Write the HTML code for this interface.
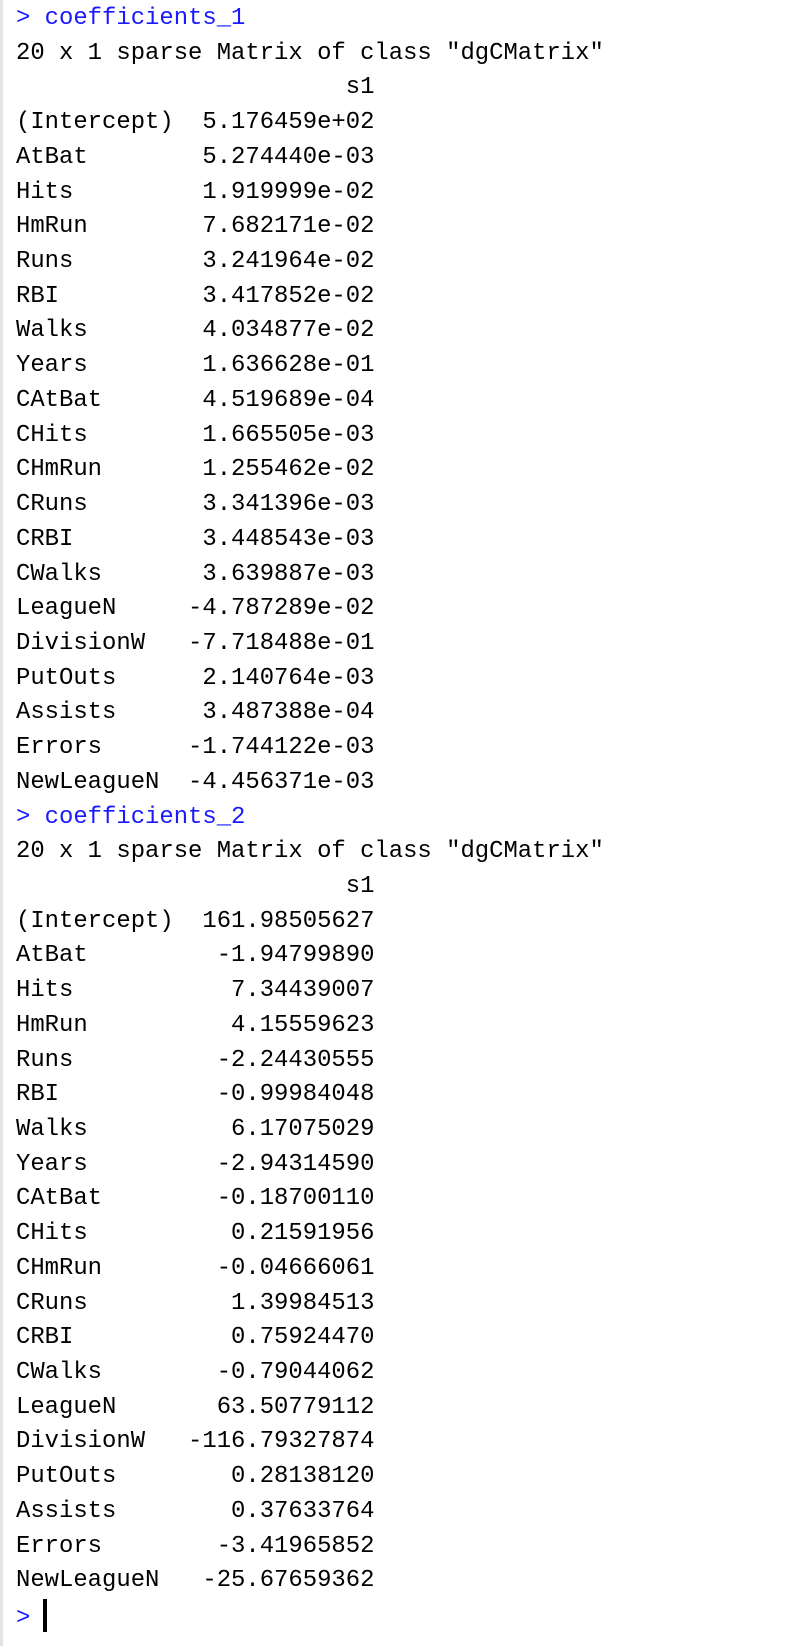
<!DOCTYPE html>
<html><head><meta charset="utf-8"><style>
html,body{margin:0;padding:0;background:#fff;width:794px;height:1646px;overflow:hidden}
.b{position:absolute;left:0;top:0;width:3px;height:1646px;background:#e4e4e4}
pre{margin:0;position:absolute;left:16px;top:2px;font-family:"Liberation Mono",monospace;font-size:23.9px;line-height:34.72px;color:#000}
.p{color:#1a1aff}
.c{display:inline-block;width:4px;height:33px;background:#000;vertical-align:-8px;margin-left:13px}
</style></head><body><div class="b"></div><pre><span class="p">&gt; coefficients_1</span>
20 x 1 sparse Matrix of class "dgCMatrix"
                       s1
(Intercept)  5.176459e+02
AtBat        5.274440e-03
Hits         1.919999e-02
HmRun        7.682171e-02
Runs         3.241964e-02
RBI          3.417852e-02
Walks        4.034877e-02
Years        1.636628e-01
CAtBat       4.519689e-04
CHits        1.665505e-03
CHmRun       1.255462e-02
CRuns        3.341396e-03
CRBI         3.448543e-03
CWalks       3.639887e-03
LeagueN     -4.787289e-02
DivisionW   -7.718488e-01
PutOuts      2.140764e-03
Assists      3.487388e-04
Errors      -1.744122e-03
NewLeagueN  -4.456371e-03
<span class="p">&gt; coefficients_2</span>
20 x 1 sparse Matrix of class "dgCMatrix"
                       s1
(Intercept)  161.98505627
AtBat         -1.94799890
Hits           7.34439007
HmRun          4.15559623
Runs          -2.24430555
RBI           -0.99984048
Walks          6.17075029
Years         -2.94314590
CAtBat        -0.18700110
CHits          0.21591956
CHmRun        -0.04666061
CRuns          1.39984513
CRBI           0.75924470
CWalks        -0.79044062
LeagueN       63.50779112
DivisionW   -116.79327874
PutOuts        0.28138120
Assists        0.37633764
Errors        -3.41965852
NewLeagueN   -25.67659362
<span class="p">&gt;</span><span class="c"></span></pre></body></html>
